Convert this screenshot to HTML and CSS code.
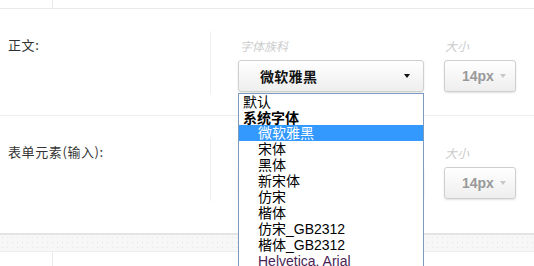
FILE: index.html
```html
<!DOCTYPE html>
<html lang="zh">
<head>
<meta charset="utf-8">
<link rel="stylesheet" href="styles.css">
</head>
<body>
<div class="topbar"><div class="topcell"></div></div>

<div class="row">
  <div class="label">正文:</div>
  <div class="fields">
    <div class="field family">
      <div class="caption">字体族科</div>
      <div class="select big"><span class="val">微软雅黑</span><i class="caret"></i></div>
      <div class="listbox">
        <div class="opt top">默认</div>
        <div class="group">系统字体</div>
        <div class="opt sel">微软雅黑</div>
        <div class="opt">宋体</div>
        <div class="opt">黑体</div>
        <div class="opt">新宋体</div>
        <div class="opt">仿宋</div>
        <div class="opt">楷体</div>
        <div class="opt">仿宋_GB2312</div>
        <div class="opt">楷体_GB2312</div>
        <div class="opt latin">Helvetica, Arial</div>
      </div>
    </div>
    <div class="field size">
      <div class="caption">大小</div>
      <div class="select small"><span class="val">14px</span><i class="caret light"></i></div>
    </div>
  </div>
</div>

<div class="row row2">
  <div class="label">表单元素(输入):</div>
  <div class="fields">
    <div class="field family">
      <div class="caption">字体族科</div>
      <div class="select big"><span class="val">微软雅黑</span><i class="caret"></i></div>
    </div>
    <div class="field size">
      <div class="caption">大小</div>
      <div class="select small"><span class="val">14px</span><i class="caret light"></i></div>
    </div>
  </div>
</div>

<div class="band"></div>
<div class="bottombar"><div class="bottomcell"></div></div>
</body>
</html>
```

FILE: styles.css
```css
html, body {
  margin: 0;
  padding: 0;
  overflow: hidden;
  background: #fff;
  font-family: "Liberation Sans", "Noto Sans CJK SC", sans-serif;
  color: #333;
}

.topbar {
  height: 8px;
  border-bottom: 1px solid #eaeaea;
}
.topcell {
  width: 52px;
  height: 8px;
  border-right: 1px solid #eaeaea;
}

.row {
  display: flex;
  padding: 22px 0 21px;
  border-bottom: 1px solid #eeeeee;
}
.row2 {
  border-bottom: none;
  padding-bottom: 32px;
}

.label {
  box-sizing: border-box;
  width: 211px;
  height: 63px;
  padding: 6px 0 0 8px;
  border-right: 1px solid #f0f0f0;
  font-family: "Noto Sans CJK SC", sans-serif;
  font-size: 13px;
  line-height: 16px;
  letter-spacing: 0.6px;
  color: #333;
}

.fields {
  display: flex;
  gap: 20px;
  margin-left: 27px;
}

.field {
  position: relative;
}
.family { width: 186px; }
.size { width: 72px; }

.caption {
  padding: 7px 0 0 2px;
  font-family: "Noto Sans CJK SC", sans-serif;
  font-size: 12px;
  line-height: 15px;
  font-style: italic;
  color: #cccccc;
}
.size .caption { padding-left: 1px; }

.select {
  box-sizing: border-box;
  margin-top: 7px;
  height: 32px;
  display: flex;
  align-items: center;
  border: 1px solid #cfcfcf;
  border-radius: 3px;
  background: linear-gradient(#ffffff, #eeeeee);
  box-shadow: 0 1px 2px rgba(0, 0, 0, 0.12);
  position: relative;
}
.big .val {
  padding-left: 21px;
  font-family: "Noto Sans CJK SC", sans-serif;
  font-weight: bold;
  font-size: 14px;
  color: #111;
  letter-spacing: 0.3px;
}
.small .val {
  padding-left: 17px;
  font-weight: bold;
  font-size: 14px;
  color: #999;
}

.caret {
  position: absolute;
  right: 13px;
  top: 13px;
  width: 0;
  height: 0;
  border-left: 3.5px solid transparent;
  border-right: 3.5px solid transparent;
  border-top: 4px solid #111;
}
.caret.light {
  right: 9px;
  border-left-width: 3px;
  border-right-width: 3px;
  border-top-color: #c8c8c8;
}

.listbox {
  position: absolute;
  left: 0;
  top: 62px;
  box-sizing: border-box;
  width: 186px;
  height: 190px;
  border: 1px solid #7d9bbf;
  background: #fff;
  font-family: "Liberation Sans", "Noto Sans CJK SC", sans-serif;
  font-size: 14px;
  line-height: 16px;
  color: #000;
  z-index: 5;
}
.opt {
  padding-left: 19px;
  height: 16px;
  white-space: nowrap;
}
.opt.top {
  padding-left: 4px;
  height: 16px;
}
.group {
  padding-left: 4px;
  height: 15px;
  font-weight: bold;
}
.opt.sel {
  background: #3399ff;
  color: #fff;
}
.opt.latin {
  color: #4a1f55;
}

.band {
  height: 16px;
  border-top: 2px solid #e4e4e4;
  border-bottom: 1px solid #ededed;
  background-color: #f7f7f7;
  background-image: radial-gradient(circle, #e6e6e6 0.8px, transparent 1px);
  background-size: 5px 5px;
}
.bottomcell {
  width: 52px;
  height: 20px;
  border-right: 1px solid #eaeaea;
}
```
